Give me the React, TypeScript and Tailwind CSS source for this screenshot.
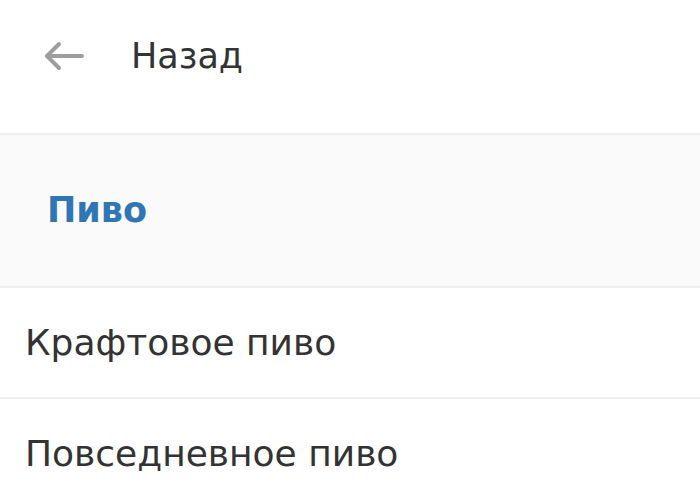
const font = { fontFamily: '"DejaVu Sans", "Noto Sans", sans-serif' };

const BackArrow = () => (
  <svg width="40" height="30" viewBox="0 0 40 30" fill="none" stroke="#9e9e9e" strokeWidth="4" strokeLinecap="round" strokeLinejoin="round">
    <path d="M38 15H3" />
    <path d="M15 3L3 15l12 12" />
  </svg>
);

const rows = ['Крафтовое пиво', 'Повседневное пиво'];

export default function App() {
  return (
    <div className="w-[700px] h-[503px] overflow-hidden bg-white" style={font}>
      <div className="h-[135px] pb-[21px] flex items-center border-b-2 border-[#efefef]">
        <div className="pl-[44px] w-[131px] flex items-center">
          <BackArrow />
        </div>
        <span className="text-[35px] text-[#333333] leading-none">Назад</span>
      </div>
      <div className="h-[153px] flex items-center pl-[47px] bg-[#fafafa] border-b-2 border-[#efefef]">
        <span className="text-[35px] font-bold text-[#2f76b5] leading-none">Пиво</span>
      </div>
      {rows.map((r) => (
        <div key={r} className="h-[111px] flex items-center pl-[25px] border-b-2 border-[#efefef]">
          <span className="text-[36px] text-[#333333] leading-none">{r}</span>
        </div>
      ))}
    </div>
  );
}
